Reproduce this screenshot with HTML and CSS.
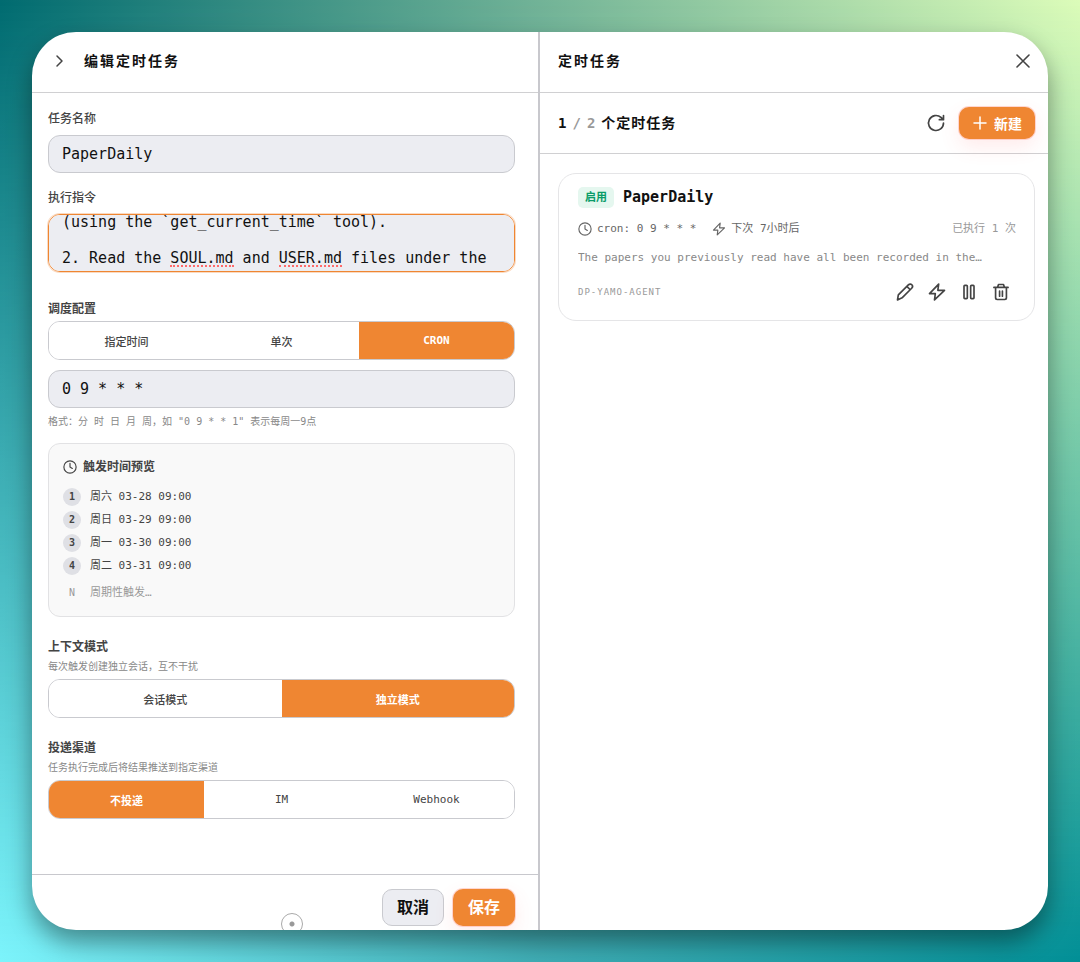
FILE: index.html
```html
<!DOCTYPE html>
<html lang="zh-CN">
<head>
  <meta charset="UTF-8" />
  <meta name="viewport" content="width=device-width, initial-scale=1" />
  <title>定时任务</title>
  <link rel="stylesheet" href="styles.css">
</head>
<body>
  <main class="window">
    <section class="pane edit-pane">
      <header class="pane-header">
        <button type="button" class="icon-btn back-btn" aria-label="收起">
          <svg class="icon-sm" viewBox="0 0 16 16"><path d="M6 3l5 5-5 5" /></svg>
        </button>
        <h2 class="pane-title">编辑定时任务</h2>
      </header>

      <form id="taskForm" class="task-form">
        <div class="field">
          <label for="taskName">任务名称</label>
          <input type="text" id="taskName" class="text-input" value="PaperDaily" />
        </div>

        <div class="field">
          <label for="taskPrompt">执行指令</label>
          <div class="prompt-box">
            <textarea id="taskPrompt" class="text-input prompt-input" spellcheck="false" rows="3">(using the `get_current_time` tool).

2. Read the SOUL.md and USER.md files under the</textarea>
            <span class="typo typo-soul"></span>
            <span class="typo typo-user"></span>
          </div>
        </div>

        <div class="section schedule">
          <h3 class="section-title">调度配置</h3>
          <div class="segment">
            <button type="button">指定时间</button>
            <button type="button">单次</button>
            <button type="button" class="active">CRON</button>
          </div>
          <input type="text" class="text-input cron-input" value="0 9 * * *" aria-label="CRON" />
          <p class="hint">格式：分 时 日 月 周，如 "0 9 * * 1" 表示每周一9点</p>
        </div>

        <div class="preview">
          <h4 class="preview-title">
            <svg class="icon-xs" viewBox="0 0 24 24"><circle cx="12" cy="12" r="10.5" /><path d="M12 5.5V12l4 2.5" /></svg>
            触发时间预览
          </h4>
          <ol class="preview-list">
            <li><span class="num">1</span>周六 03-28 09:00</li>
            <li><span class="num">2</span>周日 03-29 09:00</li>
            <li><span class="num">3</span>周一 03-30 09:00</li>
            <li><span class="num">4</span>周二 03-31 09:00</li>
            <li class="more"><span class="num">N</span>周期性触发…</li>
          </ol>
        </div>

        <div class="section">
          <h3 class="section-title">上下文模式</h3>
          <p class="hint">每次触发创建独立会话，互不干扰</p>
          <div class="segment">
            <button type="button">会话模式</button>
            <button type="button" class="active">独立模式</button>
          </div>
        </div>

        <div class="section">
          <h3 class="section-title">投递渠道</h3>
          <p class="hint">任务执行完成后将结果推送到指定渠道</p>
          <div class="segment">
            <button type="button" class="active">不投递</button>
            <button type="button">IM</button>
            <button type="button">Webhook</button>
          </div>
        </div>
      </form>

      <footer class="form-footer">
        <button type="button" class="btn btn-cancel">取消</button>
        <button type="submit" form="taskForm" class="btn btn-save">保存</button>
        <span class="handle"></span>
      </footer>
    </section>

    <section class="pane list-pane">
      <header class="pane-header">
        <h2 class="pane-title">定时任务</h2>
        <button type="button" class="icon-btn" aria-label="关闭">
          <svg class="icon close-icon" viewBox="0 0 20 20"><path d="M4 4l12 12M16 4L4 16" /></svg>
        </button>
      </header>

      <div class="toolbar">
        <div class="count">
          <span>1</span><span class="muted">/</span><span class="muted">2</span><span class="count-label">个定时任务</span>
        </div>
        <button type="button" class="icon-btn" aria-label="刷新">
          <svg class="icon" viewBox="0 0 24 24"><path d="M21 12a9 9 0 1 1-3-6.700L20.500 7.500M21 3v5h-5" /></svg>
        </button>
        <button type="button" class="btn btn-new">
          <svg class="icon-sm" viewBox="0 0 16 16"><path d="M8 2v12M2 8h12" /></svg>
          新建
        </button>
      </div>

      <div class="task-list">
        <article class="task-card">
          <div class="task-head">
            <span class="status">启用</span>
            <h3 class="task-name">PaperDaily</h3>
          </div>
          <div class="task-meta">
            <span class="meta-item">
              <svg class="icon-xs" viewBox="0 0 24 24"><circle cx="12" cy="12" r="10.5" /><path d="M12 5.5V12l4 2.5" /></svg>
              cron: 0 9 * * *
            </span>
            <span class="meta-item">
              <svg class="icon-xs" viewBox="0 0 24 24"><path d="M14 2L2.5 14H10l-1 8 12.500-12H13z" /></svg>
              下次 7小时后
            </span>
            <span class="runs">已执行 1 次</span>
          </div>
          <p class="task-desc">The papers you previously read have all been recorded in the…</p>
          <div class="task-foot">
            <span class="agent">DP-YAMO-AGENT</span>
            <div class="actions">
              <button type="button" class="icon-btn" aria-label="编辑">
                <svg class="icon" viewBox="0 0 24 24"><path d="M16 3.500c1.500-1.500 3.200-1.200 4.200-.2s1.200 2.700-.2 4.200L8.500 19 3 21.500l1-6zM14.500 5.500l3.800 3.800" /></svg>
              </button>
              <button type="button" class="icon-btn" aria-label="立即执行">
                <svg class="icon" viewBox="0 0 24 24"><path d="M14 2.500L3 14h7l-1 7.500L21 10h-8z" /></svg>
              </button>
              <button type="button" class="icon-btn" aria-label="暂停">
                <svg class="icon" viewBox="0 0 24 24"><rect x="6" y="4" width="4" height="16" rx="1" /><rect x="14" y="4" width="4" height="16" rx="1" /></svg>
              </button>
              <button type="button" class="icon-btn" aria-label="删除">
                <svg class="icon" viewBox="0 0 24 24"><path d="M3.500 6.500h17M5.500 6.500V19a2 2 0 0 0 2 2h9a2 2 0 0 0 2-2V6.500M8 6l1-3h6l1 3M10.300 11v6M13.700 11v6" /></svg>
              </button>
            </div>
          </div>
        </article>
      </div>
    </section>
  </main>

  <script>
    const prompt = document.getElementById('taskPrompt');
    prompt.scrollTop = 14;

    document.getElementById('taskForm').addEventListener('submit', function(e) {
      e.preventDefault();
    });

    document.querySelectorAll('.segment').forEach(function(segment) {
      segment.addEventListener('click', function(e) {
        if (e.target.tagName !== 'BUTTON') return;
        segment.querySelector('.active').classList.remove('active');
        e.target.classList.add('active');
      });
    });
  </script>
</body>
</html>
```

FILE: styles.css
```css
* {
  box-sizing: border-box;
}

body {
  margin: 0;
  height: 100vh;
  padding: 32px;
  position: relative;
  font-family: "DejaVu Sans Mono", "Noto Sans CJK SC", monospace;
  font-size: 11px;
  line-height: 16px;
  color: #444;
  background: linear-gradient(to right, #016b70, #72b397 50%, #dcfcb9);
}

/* bottom half of the backdrop, faded in from the top */
body::before {
  content: "";
  position: absolute;
  inset: 0;
  background: linear-gradient(to right, #7cf4fc, #3fadb5 50%, #018f96);
  -webkit-mask-image: linear-gradient(to bottom, transparent, #000);
  mask-image: linear-gradient(to bottom, transparent, #000);
}

h2, h3, h4, p, ol {
  margin: 0;
  padding: 0;
}

button, input, textarea {
  font-family: inherit;
  color: inherit;
}

button {
  cursor: pointer;
}

svg {
  display: block;
  flex: none;
  fill: none;
  stroke: currentColor;
  stroke-width: 2;
  stroke-linecap: round;
  stroke-linejoin: round;
}

.icon { width: 20px; height: 20px; }
.icon-sm { width: 16px; height: 16px; stroke-width: 1.5; }
.icon-xs { width: 14px; height: 14px; }
.close-icon { stroke-width: 1.6; }

.window {
  position: relative;
  display: grid;
  grid-template-columns: 1fr 1fr;
  height: 100%;
  background: #fff;
  border-radius: 44px;
  overflow: hidden;
  box-shadow: 0 12px 24px rgba(0, 0, 0, 0.4);
}

.pane {
  display: flex;
  flex-direction: column;
  min-width: 0;
  min-height: 0;
}

.edit-pane {
  border-right: 2px solid #c8c8cd;
}

.pane-header {
  display: flex;
  align-items: center;
  flex: none;
  height: 61px;
  padding: 0 10px 3px 18px;
  border-bottom: 1px solid #d0d0d2;
}

.edit-pane .pane-header {
  gap: 10px;
  padding-left: 12px;
}

.pane-title {
  flex: 1;
  font-size: 14px;
  font-weight: 700;
  line-height: 20px;
  letter-spacing: 2px;
  color: #111;
}

.icon-btn {
  display: flex;
  align-items: center;
  justify-content: center;
  width: 30px;
  height: 32px;
  padding: 0;
  border: none;
  background: none;
  color: #444;
}

/* form */
.task-form {
  flex: 1;
  min-height: 0;
  overflow: hidden;
  padding: 18px 23px 0 16px;
}

.field {
  margin-bottom: 17px;
}

.field label, .section-title {
  display: block;
  font-size: 12px;
  font-weight: 500;
  line-height: 16px;
}

.field label {
  margin-bottom: 8px;
}

.section-title {
  font-weight: 700;
  margin-bottom: 4px;
}

.text-input {
  display: block;
  width: 100%;
  height: 38px;
  padding: 0 13px;
  border: 1px solid #c9cacf;
  border-radius: 12px;
  outline: none;
  background: #ecedf2;
  font-size: 15px;
  line-height: 18px;
  color: #111;
}

.prompt-box {
  position: relative;
  font-size: 15px;
}

.prompt-input {
  height: 58px;
  padding: 12px 13px;
  border-color: #ef8632;
  box-shadow: 0 0 0 1px rgba(239, 134, 50, 0.3);
  resize: none;
  scrollbar-width: none;
}

/* spell check marks */
.typo {
  position: absolute;
  bottom: 5px;
  width: 7ch;
  border-bottom: 2px dotted #ff6a6a;
}

.typo-soul { left: calc(14px + 12ch); }
.typo-user { left: calc(14px + 24ch); }

.section {
  margin-top: 22px;
}

.schedule {
  margin-top: 29px;
}

.segment {
  display: flex;
  height: 39px;
  border: 1px solid #c9cacf;
  border-radius: 12px;
  overflow: hidden;
}

.segment button {
  flex: 1;
  padding: 0;
  border: none;
  background: #fff;
  font-size: 11px;
  font-weight: 500;
  color: #444;
}

.segment button.active {
  background: #ef8632;
  color: #fff;
  font-weight: 700;
}

.cron-input {
  margin: 10px 0 6px;
}

.hint {
  font-size: 10px;
  line-height: 16px;
  color: #888;
}

.hint + .segment {
  margin-top: 4px;
}

.preview {
  margin-top: 13px;
  padding: 14px;
  border: 1px solid #e2e2e4;
  border-radius: 12px;
  background: #f9f9f9;
}

.preview-title {
  display: flex;
  align-items: center;
  gap: 6px;
  margin-bottom: 12px;
  font-size: 12px;
  line-height: 18px;
}

.preview-list {
  display: flex;
  flex-direction: column;
  gap: 5px;
  list-style: none;
}

.preview-list li {
  display: flex;
  align-items: center;
  gap: 9px;
  line-height: 18px;
}

.num {
  width: 18px;
  height: 18px;
  border-radius: 50%;
  background: #dfe0e5;
  font-size: 10px;
  font-weight: 700;
  text-align: center;
}

.preview-list .more {
  margin-top: 4px;
  color: #999;
}

.more .num {
  background: none;
  font-weight: 400;
}

/* footer */
.form-footer {
  position: relative;
  display: flex;
  justify-content: flex-end;
  gap: 9px;
  flex: none;
  height: 56px;
  padding: 14px 23px 0 16px;
  border-top: 1px solid #c8c8cd;
}

.btn {
  border: none;
  border-radius: 10px;
  font-weight: 700;
}

.form-footer .btn {
  width: 62px;
  height: 37px;
  padding: 0 0 3px;
  font-size: 16px;
}

.form-footer .btn-cancel {
  border: 1px solid #c9cacf;
  background: #ecedf2;
  color: #111;
}

.btn-save, .btn-new {
  background: #ef8632;
  color: #fff;
  box-shadow: 0 0 0 1px rgba(255, 130, 110, 0.3), 0 8px 20px rgba(255, 90, 90, 0.12);
}

.handle {
  position: absolute;
  left: 50%;
  bottom: -5px;
  width: 22px;
  height: 22px;
  margin-left: -4px;
  border: 1px solid #aaa;
  border-radius: 50%;
  background: radial-gradient(circle, #999 2px, #fff 3px);
}

/* task list */
.toolbar {
  display: flex;
  align-items: center;
  flex: none;
  gap: 8px;
  height: 61px;
  padding: 0 13px 0 18px;
  border-bottom: 1px solid #d0d0d2;
}

.count {
  display: flex;
  flex: 1;
  gap: 6px;
  font-size: 14px;
  font-weight: 700;
  line-height: 20px;
  color: #111;
}

.count .muted {
  color: #999;
}

.count-label {
  letter-spacing: 1px;
}

.btn-new {
  display: flex;
  align-items: center;
  gap: 6px;
  height: 32px;
  padding: 0 13px;
  font-size: 14px;
}

.task-list {
  padding: 19px 13px 19px 18px;
}

.task-card {
  padding: 13px 18px 12px 19px;
  border: 1px solid #e5e5e7;
  border-radius: 18px;
}

.task-head {
  display: flex;
  align-items: center;
  gap: 9px;
}

.status {
  padding: 0 7px;
  border-radius: 5px;
  background: #e5f7ef;
  font-size: 11px;
  font-weight: 700;
  line-height: 21px;
  color: #0a9c68;
}

.task-name {
  font-size: 15px;
  line-height: 21px;
  color: #111;
}

.task-meta {
  display: flex;
  align-items: center;
  gap: 16px;
  margin-top: 13px;
  color: #666;
}

.meta-item {
  display: flex;
  align-items: center;
  gap: 5px;
}

.runs {
  margin-left: auto;
  color: #999;
}

.task-desc {
  margin-top: 13px;
  color: #888;
  white-space: nowrap;
  overflow: hidden;
  text-overflow: ellipsis;
}

.task-foot {
  display: flex;
  align-items: center;
  justify-content: space-between;
  margin-top: 10px;
}

.agent {
  font-size: 9px;
  letter-spacing: 1px;
  color: #999;
}

.actions {
  display: flex;
  gap: 2px;
}
```
